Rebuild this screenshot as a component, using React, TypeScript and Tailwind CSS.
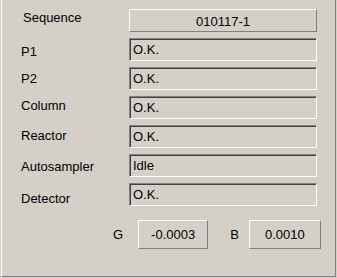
const raised =
  'flex items-center justify-center border border-t-white border-l-white border-r-[#808080] border-b-[#808080]';
const sunken =
  'flex items-center pl-[3px] border border-t-[#808080] border-l-[#808080] border-r-white border-b-white shadow-[inset_1px_1px_0_#404040]';

const rows = [
  { label: 'P1', value: 'O.K.', pad: 'pt-[6px]' },
  { label: 'P2', value: 'O.K.', pad: 'pt-[4px]' },
  { label: 'Column', value: 'O.K.', pad: 'pt-[2px]' },
  { label: 'Reactor', value: 'O.K.', pad: 'pt-[3px]' },
  { label: 'Autosampler', value: 'Idle', pad: 'pt-[5px]' },
  { label: 'Detector', value: 'O.K.', pad: 'pt-[8px]' },
];

export default function App() {
  return (
    <div
      className="w-[337px] h-[278px] bg-[#d4d0c8] px-[1px] pb-[1px] text-[13px] leading-[15px] text-black"
      style={{ fontFamily: '"Liberation Sans", Arial, sans-serif' }}
    >
      <div className="h-[277px] border-l border-l-white border-r border-r-[#808080] border-b border-b-[#808080] pl-[19px] pt-[9px] flex flex-col gap-[6px]">
        <div className="flex h-[23px] items-start">
          <div className="w-[108px] pl-[2px] pt-[1px]">Sequence</div>
          <div className={`${raised} w-[188px] h-[23px] pt-[2px]`}>010117-1</div>
        </div>
        {rows.map((r) => (
          <div key={r.label} className="flex h-[23px] items-start">
            <div className={`w-[108px] ${r.pad}`}>{r.label}</div>
            <div className={`${sunken} w-[188px] h-[23px]`}>{r.value}</div>
          </div>
        ))}
        <div className="flex h-[29px] items-center mt-[8px]">
          <div className="ml-[92px]">G</div>
          <div className={`${raised} ml-[15px] w-[70px] h-[29px]`}>-0.0003</div>
          <div className="ml-[22px]">B</div>
          <div className={`${raised} ml-[10px] w-[72px] h-[29px]`}>0.0010</div>
        </div>
      </div>
    </div>
  );
}
